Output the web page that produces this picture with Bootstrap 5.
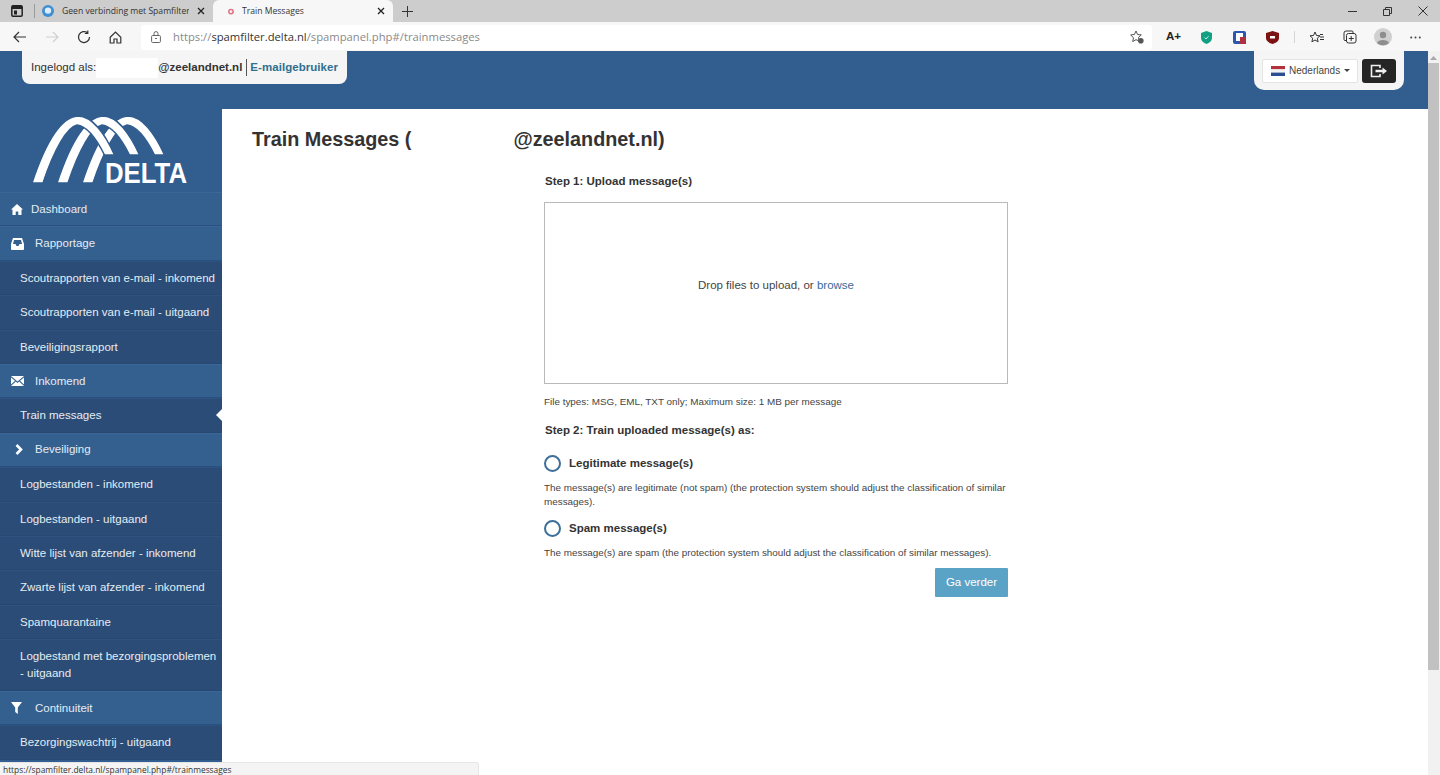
<!DOCTYPE html>
<html lang="nl">
<head>
<meta charset="utf-8">
<title>Train Messages</title>
<link href="https://cdn.jsdelivr.net/npm/bootstrap@5.3.0/dist/css/bootstrap.min.css" rel="stylesheet">
<style>
html,body{height:775px;overflow:hidden;margin:0}
body{font-family:"Liberation Sans",Arial,sans-serif;color:#333;font-size:11px;background:#fff}
.shell{height:775px}
.tabstrip{height:22px;background:#cdcdcd;font-family:"Open Sans","Noto Sans",sans-serif;font-size:8.6px;color:#333}
.tabside{width:34px}
.tabsep{width:1px;height:14px;background:#9a9a9a}
.tabcell{height:22px;padding:0 8px 0 7px}
.tabone{width:178px}
.tabtwo{width:180px;background:#f7f7f7;border-radius:6px 6px 0 0;padding-left:14px;gap:7px}
.tabname{flex:1;white-space:nowrap;overflow:hidden}
.addtab{width:28px}
.winbtn{width:35px}
.toolbar{height:29px;background:#f7f7f7;padding-top:1px}
.navgroup{width:141px;padding-left:13px}
.navslot{width:33px}
.urlbar{width:1011px;height:25px;background:#fff;border-radius:3px;padding-left:10px;font-size:11.25px;font-family:"Open Sans","Noto Sans",sans-serif;color:#8a8a8a;white-space:nowrap}
.urlhost{color:#333}
.urllock{margin-right:12px}
.exticons{flex:1;padding-left:5px}
.extslot{width:33px}
.fontbadge{font-size:11.5px;font-weight:700;color:#222}
.toolline{width:1px;height:12px;background:#d5d5d5;margin:0 5px}
.pagewrap{height:724px}
.pagecol{width:1428px}
.topband{height:58px;background:#325d8f;padding:0 24px 0 22px}
.loginbox{width:325px;height:33px;background:#f5f5f5;border-radius:0 0 8px 8px;padding:0 9px;font-size:11.5px;white-space:nowrap}
.hiddenname{width:63px;height:20px;background:#fff}
.acctname{font-weight:700}
.acctrule{width:1px;height:17px;background:#555;margin:0 3px 0 4px}
.acctrole{font-weight:700;color:#2f6f8f;letter-spacing:.05px}
.rightbox{width:150px;height:39px;background:#f5f5f5;border-radius:0 0 10px 10px;padding:0 8px}
.langbtn{width:96px;height:24px;padding:0 0 0 8px;font-size:10px;color:#444;background:#fff;border:1px solid #e4e4e4;border-radius:2px;white-space:nowrap}
.langbtn::after{margin-left:4px;border-top-width:.35em;border-right-width:.35em;border-left-width:.35em}
.logoutbtn{width:34px;height:24px;padding:0;background:#252525;border:0;border-radius:3px}
.bodyrow{height:666px}
.sidepanel{width:222px;background:#325d8f;overflow:hidden;flex:none}
.logozone{height:83px}
.sideitem{display:block;height:34.4px;line-height:33px;color:#e4ebf3;text-decoration:none;font-size:11.5px;white-space:nowrap;border-bottom:1px solid #2a507f;border-top:1px solid #3a6699}
.headitem{background:#34608f;padding-left:11px;display:flex;align-items:center}
.headicon{width:24px;flex:none;display:flex}
.homeicon{width:20px}
.chevicon{padding-left:4px}
.subitem{background:#2a4c76;padding-left:20px;color:#e6ecf3;position:relative;border-top-color:#2f5380;border-bottom-color:#284870}
.tallitem{height:52px;line-height:17px;padding-top:8px;white-space:normal;padding-right:2px}
.activeitem::after{content:"";position:absolute;right:0;top:10px;border:6px solid transparent;border-left:0;border-right-color:#fff;border-right-width:6px}
.mainpane{flex:1;padding:18px 0 0 30px;min-width:0}
.pagetitle{font-size:19.8px;font-weight:700;line-height:24px;margin:0;color:#333;white-space:nowrap}
.titlegap{display:inline-block;width:102px}
.formcol{width:464px;margin:23px 0 0 292px}
.steplabel{font-size:11.5px;font-weight:700;line-height:14px;margin:0 0 0 1px;color:#333}
.dropbox{height:182px;margin-top:14px;border:1px solid #b9b9b9;font-size:11.5px;color:#444;padding-bottom:15px}
.dropbox a{color:#3a6a9a;text-decoration:none}
.finetext{font-size:9.9px;line-height:14px;margin:0;color:#444}
.filehint{margin-top:11px}
.step2{margin-top:14px}
.choice{font-size:11.5px;font-weight:700;line-height:18px;color:#333;margin:0}
.choicerow{margin-top:17px}
.choicerow2{margin-top:10px}
.choicetext{margin-top:9px}
.choiceinput.form-check-input{width:17px;height:17px;margin:0 8px 0 0;border:2px solid #3d6f98;flex:none}
.btnrow{margin-top:8px}
.nextbtn{width:73px;height:29px;padding:0;background:#5ba3c6;border:0;border-radius:1px;color:#fff;font-size:11.5px}
.scrolltrack{width:12px;background:#f1f1f1;padding:1px 1px 0 0}
.scrollcap{height:11px}
.scrollthumb{height:607px;background:#c1c1c1}
.statusline{position:absolute;left:0;bottom:0;width:479px;height:13px;background:#f4f4f4;border-top:1px solid #e6e6e6;border-right:1px solid #e6e6e6;border-radius:0 3px 0 0;font-family:"Open Sans","Noto Sans",sans-serif;font-size:8.4px;line-height:13px;padding-left:3px;color:#333;white-space:nowrap}
</style>
</head>
<body>
<div class="shell d-flex flex-column position-relative">

  <div class="tabstrip d-flex align-items-center">
    <div class="tabside d-flex align-items-center justify-content-center">
      <svg width="12" height="12" viewBox="0 0 12 12"><rect x=".8" y=".8" width="10.400" height="10.400" rx="1.200" fill="none" stroke="#222" stroke-width="1.500"/><rect x="1" y="1" width="10" height="3" fill="#222"/><rect x="3" y="5.500" width="3" height="4" fill="#222"/></svg>
    </div>
    <div class="tabsep"></div>
    <div class="tabcell tabone d-flex align-items-center gap-2">
      <svg width="12" height="12" viewBox="0 0 12 12"><circle cx="6" cy="6" r="6" fill="#3f8fd2"/><circle cx="6" cy="5.600" r="3.200" fill="#dcecf8"/></svg>
      <span class="tabname">Geen verbinding met Spamfilter</span>
      <svg width="8" height="8" viewBox="0 0 8 8"><path d="M1 1l6 6M7 1L1 7" stroke="#222" stroke-width="1.300"/></svg>
    </div>
    <div class="tabcell tabtwo d-flex align-items-center">
      <svg width="8" height="8" viewBox="0 0 8 8"><circle cx="4" cy="4.600" r="2.200" fill="none" stroke="#e0707c" stroke-width="1.500"/></svg>
      <span class="tabname">Train Messages</span>
      <svg width="8" height="8" viewBox="0 0 8 8"><path d="M1 1l6 6M7 1L1 7" stroke="#222" stroke-width="1.300"/></svg>
    </div>
    <div class="addtab d-flex justify-content-center">
      <svg width="11" height="11" viewBox="0 0 11 11"><path d="M5.500 0v11M0 5.500h11" stroke="#333" stroke-width="1"/></svg>
    </div>
    <div class="flex-grow-1"></div>
    <div class="winbtn d-flex justify-content-center"><svg width="9" height="9" viewBox="0 0 9 9"><path d="M0 4.500h9" stroke="#333"/></svg></div>
    <div class="winbtn d-flex justify-content-center"><svg width="9" height="9" viewBox="0 0 9 9"><path d="M.5 2.500h6v6h-6zM2.500 2.500v-2h6v6h-2" fill="none" stroke="#333"/></svg></div>
    <div class="winbtn d-flex justify-content-center"><svg width="10" height="10" viewBox="0 0 10 10"><path d="M.5.5l9 9M9.500.5l-9 9" stroke="#333"/></svg></div>
  </div>

  <div class="toolbar d-flex align-items-center">
    <div class="navgroup d-flex align-items-center">
      <div class="navslot d-flex"><svg width="14" height="12" viewBox="0 0 14 12"><path d="M13 6H1.500M6 1L1 6l5 5" fill="none" stroke="#333" stroke-width="1.200"/></svg></div>
      <div class="navslot d-flex"><svg width="14" height="12" viewBox="0 0 14 12"><path d="M1 6h11.500M8 1l5 5-5 5" fill="none" stroke="#cfcfcf" stroke-width="1.200"/></svg></div>
      <div class="navslot d-flex"><svg width="14" height="14" viewBox="0 0 14 14"><path d="M12.500 7A5.500 5.500 0 1 1 10.500 2.800M10.800 .5v3h-3" fill="none" stroke="#333" stroke-width="1.200"/></svg></div>
      <div class="navslot d-flex"><svg width="13" height="13" viewBox="0 0 13 13"><path d="M1.200 6.200L6.500 1l5.300 5.200V12H8V8H5v4H1.200z" fill="none" stroke="#333" stroke-width="1.200"/></svg></div>
    </div>
    <div class="urlbar d-flex align-items-center">
      <svg class="urllock" width="10" height="12" viewBox="0 0 10 12"><rect x=".6" y="4.500" width="8.800" height="7" rx="1" fill="none" stroke="#666"/><path d="M3 4.500V2.600a2 2 0 0 1 4 0v1.900" fill="none" stroke="#666"/><path d="M4 7.500h2" stroke="#666"/></svg>
      <span>https://<span class="urlhost">spamfilter.delta.nl</span>/spampanel.php#/trainmessages</span>
      <span class="flex-grow-1"></span>
      <svg class="me-2" width="14" height="14" viewBox="0 0 14 14"><path d="M6 1l1.600 3.500 3.700.4-2.800 2.500.8 3.700L6 9.700l-3.300 1.900.8-3.700L.7 4.900l3.700-.4z" fill="none" stroke="#555"/><circle cx="10.800" cy="10.800" r="2.800" fill="#555"/></svg>
    </div>
    <div class="exticons d-flex align-items-center">
      <div class="extslot d-flex justify-content-center"><span class="fontbadge">A+</span></div>
      <div class="extslot d-flex justify-content-center"><svg width="11" height="13" viewBox="0 0 11 13"><path d="M5.500 0L11 2v5c0 3-2.500 5-5.500 6C2.500 12 0 10 0 7V2z" fill="#12a085"/><path d="M3.500 6.500l1.500 1.500 2.500-2.800" fill="none" stroke="#bdeee2"/></svg></div>
      <div class="extslot d-flex justify-content-center"><svg width="13" height="13" viewBox="0 0 13 13"><rect width="13" height="13" rx="2" fill="#2c57b0"/><rect x="3" y="2" width="7" height="8" fill="#fff"/><rect x="7" y="6" width="6" height="7" fill="#b03040"/></svg></div>
      <div class="extslot d-flex justify-content-center"><svg width="13" height="13" viewBox="0 0 13 13"><path d="M6.500 0L13 2v5c0 3-3 5-6.500 6C3 12 0 10 0 7V2z" fill="#7c1212"/><rect x="4" y="5" width="5" height="2.500" fill="#fff"/></svg></div>
      <div class="toolline"></div>
      <div class="extslot d-flex justify-content-center"><svg width="15" height="13" viewBox="0 0 15 13"><path d="M6 1l1.500 3.500 3.500.3-2.700 2.400.8 3.600L6 9l-3.100 1.800.8-3.600L1 4.800l3.500-.3zM11 6h4M11 8.500h4M11 3.500h3" fill="none" stroke="#333"/></svg></div>
      <div class="extslot d-flex justify-content-center"><svg width="14" height="14" viewBox="0 0 14 14"><path d="M3 10.500H2a1 1 0 0 1-1-1V3a2 2 0 0 1 2-2h6a1 1 0 0 1 1 1v1" fill="none" stroke="#333"/><rect x="3.500" y="3.500" width="9.500" height="9.500" rx="2" fill="none" stroke="#333"/><path d="M8.200 6v5M5.800 8.500h5" stroke="#333"/></svg></div>
      <div class="extslot d-flex justify-content-center"><svg width="18" height="18" viewBox="0 0 18 18"><circle cx="9" cy="9" r="9" fill="#d0d0d0"/><circle cx="9" cy="7" r="3.200" fill="#8e8e8e"/><path d="M3 15c1-4 11-4 12 0a9 9 0 0 1-12 0z" fill="#8e8e8e"/></svg></div>
      <div class="extslot d-flex justify-content-center"><svg width="11" height="3" viewBox="0 0 11 3"><circle cx="1.200" cy="1.500" r="1" fill="#444"/><circle cx="5.500" cy="1.500" r="1" fill="#444"/><circle cx="9.800" cy="1.500" r="1" fill="#444"/></svg></div>
    </div>
  </div>

  <div class="pagewrap d-flex">
    <div class="pagecol d-flex flex-column">
      <header class="topband d-flex justify-content-between align-items-start">
        <div class="loginbox d-flex align-items-center">
          <span>Ingelogd als:</span>
          <span class="hiddenname"></span>
          <span class="acctname">@zeelandnet.nl</span>
          <span class="acctrule"></span>
          <span class="acctrole">E-mailgebruiker</span>
        </div>
        <div class="rightbox d-flex align-items-center justify-content-between">
          <button class="btn langbtn dropdown-toggle d-flex align-items-center" type="button">
            <svg class="me-1" width="14" height="10" viewBox="0 0 14 10"><rect width="14" height="3.400" fill="#b5303d"/><rect y="3.300" width="14" height="3.400" fill="#f3f3f3"/><rect y="6.600" width="14" height="3.400" fill="#2c4f94"/></svg>
            Nederlands
          </button>
          <button class="btn logoutbtn d-flex align-items-center justify-content-center" type="button" aria-label="Uitloggen">
            <svg width="18" height="14" viewBox="0 0 18 14"><path d="M10 4V1.500H1.500v11H10V10" fill="none" stroke="#f0f0f0" stroke-width="1.600"/><path d="M5.500 5.800h7V3.500L17 7l-4.500 3.500V8.200h-7z" fill="#f0f0f0"/></svg>
          </button>
        </div>
      </header>

      <div class="bodyrow d-flex">
        <nav class="sidepanel">
          <div class="logozone">
            <svg width="222" height="83" viewBox="0 1 222 83">
              <defs>
                <path id="deltaarc" d="M32 75C43 42 59 9 78 8C92 8 105 26 114.500 47H104.500C97 32 87 18 77 17C67 19 54 42 43 75Z" fill="#fff" stroke="#325d8f" stroke-width="1.500"/>
              </defs>
              <use href="#deltaarc" x="50"/>
              <use href="#deltaarc" x="25"/>
              <use href="#deltaarc"/>
              <text x="105" y="75" font-family="Liberation Sans" font-size="30" font-weight="700" fill="#fff" textLength="82" lengthAdjust="spacingAndGlyphs">DELTA</text>
            </svg>
          </div>
          <a class="sideitem headitem" href="#"><span class="headicon homeicon"><svg width="12" height="11" viewBox="0 0 12 11"><path d="M6 0L0 5.500h1.500V11h3.200V7.500h2.600V11h3.200V5.500H12z" fill="#fff"/></svg></span>Dashboard</a>
          <a class="sideitem headitem" href="#"><span class="headicon"><svg width="13" height="12" viewBox="0 0 13 12"><path d="M2 0h9l2 6v5a1 1 0 0 1-1 1H1a1 1 0 0 1-1-1V6zM3 2L2 6h2.500l1 2h2l1-2H11l-1-4z" fill="#fff" fill-rule="evenodd"/></svg></span>Rapportage</a>
          <a class="sideitem subitem" href="#">Scoutrapporten van e-mail - inkomend</a>
          <a class="sideitem subitem" href="#">Scoutrapporten van e-mail - uitgaand</a>
          <a class="sideitem subitem" href="#">Beveiligingsrapport</a>
          <a class="sideitem headitem" href="#"><span class="headicon"><svg width="13" height="10" viewBox="0 0 13 10"><path d="M0 0h13L6.500 5.500zM0 1.500v7l4-3.800zM13 1.500v7l-4-3.800zM0 10h13L8.200 5.500 6.500 7 4.800 5.500z" fill="#fff"/></svg></span>Inkomend</a>
          <a class="sideitem subitem activeitem" href="#">Train messages</a>
          <a class="sideitem headitem" href="#"><span class="headicon chevicon"><svg width="8" height="11" viewBox="0 0 8 11"><path d="M1.500 1l4.500 4.500L1.500 10" fill="none" stroke="#fff" stroke-width="2.600"/></svg></span>Beveiliging</a>
          <a class="sideitem subitem" href="#">Logbestanden - inkomend</a>
          <a class="sideitem subitem" href="#">Logbestanden - uitgaand</a>
          <a class="sideitem subitem" href="#">Witte lijst van afzender - inkomend</a>
          <a class="sideitem subitem" href="#">Zwarte lijst van afzender - inkomend</a>
          <a class="sideitem subitem" href="#">Spamquarantaine</a>
          <a class="sideitem subitem tallitem" href="#">Logbestand met bezorgingsproblemen - uitgaand</a>
          <a class="sideitem headitem" href="#"><span class="headicon"><svg width="11" height="12" viewBox="0 0 11 12"><path d="M0 0h11L6.800 5.500V12L4.200 10V5.500z" fill="#fff"/></svg></span>Continuiteit</a>
          <a class="sideitem subitem" href="#">Bezorgingswachtrij - uitgaand</a>
        </nav>

        <main class="mainpane">
          <h1 class="pagetitle">Train Messages (<span class="titlegap"></span>@zeelandnet.nl)</h1>
          <div class="formcol">
            <p class="steplabel">Step 1: Upload message(s)</p>
            <div class="dropbox d-flex align-items-center justify-content-center">
              <span>Drop files to upload, or <a href="#">browse</a></span>
            </div>
            <p class="finetext filehint">File types: MSG, EML, TXT only; Maximum size: 1 MB per message</p>
            <p class="steplabel step2">Step 2: Train uploaded message(s) as:</p>
            <div class="d-flex align-items-center choicerow">
              <input class="form-check-input choiceinput" type="radio" name="kind" id="legit">
              <label class="choice" for="legit">Legitimate message(s)</label>
            </div>
            <p class="finetext choicetext">The message(s) are legitimate (not spam) (the protection system should adjust the classification of similar messages).</p>
            <div class="d-flex align-items-center choicerow2">
              <input class="form-check-input choiceinput" type="radio" name="kind" id="spam">
              <label class="choice" for="spam">Spam message(s)</label>
            </div>
            <p class="finetext choicetext">The message(s) are spam (the protection system should adjust the classification of similar messages).</p>
            <div class="d-flex justify-content-end btnrow">
              <button class="btn nextbtn" type="button">Ga verder</button>
            </div>
          </div>
        </main>
      </div>
    </div>
    <div class="scrolltrack">
      <div class="scrollcap d-flex justify-content-center align-items-center">
        <svg width="7" height="4" viewBox="0 0 7 4"><path d="M3.500 0L7 4H0z" fill="#a8a8a8"/></svg>
      </div>
      <div class="scrollthumb"></div>
    </div>
  </div>

  <div class="statusline">https://spamfilter.delta.nl/spampanel.php#/trainmessages</div>
</div>
<script src="https://cdn.jsdelivr.net/npm/bootstrap@5.3.0/dist/js/bootstrap.bundle.min.js"></script>
</body>
</html>
